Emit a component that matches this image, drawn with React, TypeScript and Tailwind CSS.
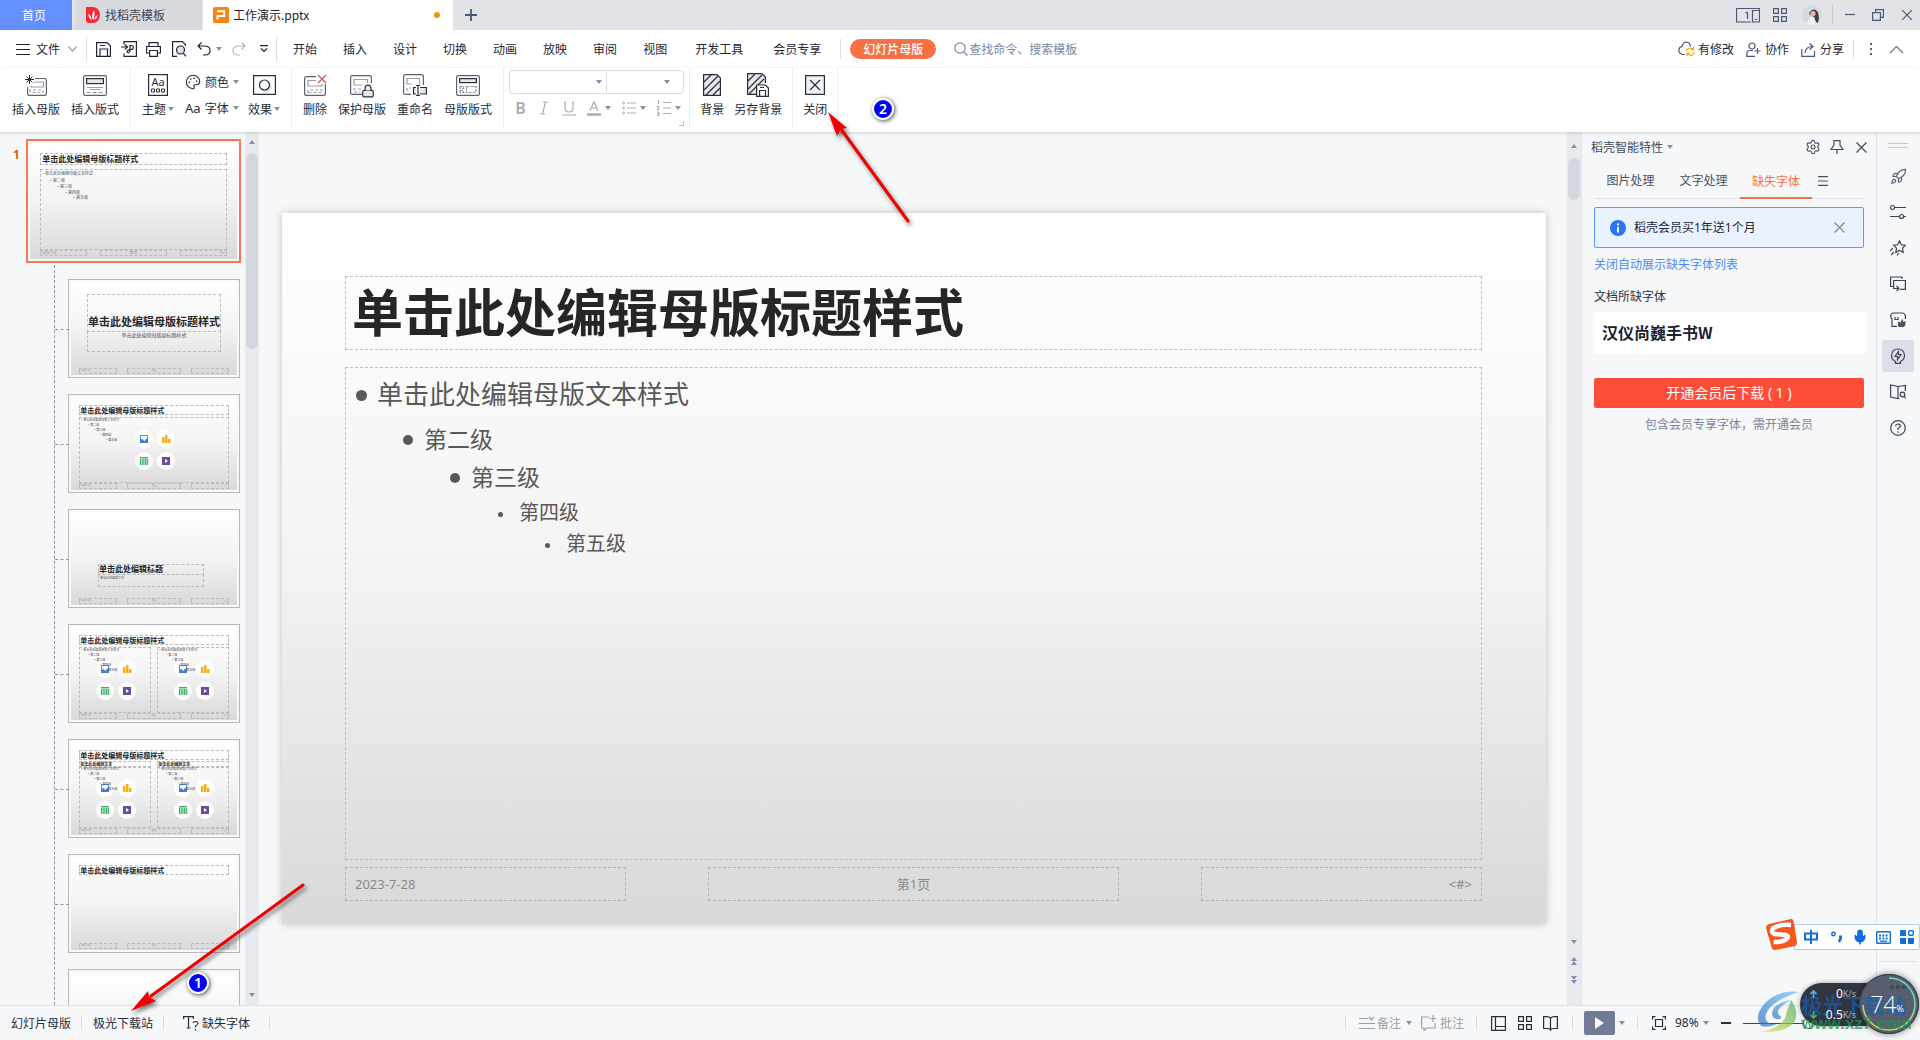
import React from "react";
import { Lock, Mic, Palette, Rocket, Settings } from "lucide-react";

type Kids = { children?: React.ReactNode; className?: string };

function Icon({ w = 16, h = 16, children, className = "" }: Kids & { w?: number; h?: number }) {
  return (
    <svg
      width={w}
      height={h}
      viewBox={`0 0 ${w} ${h}`}
      fill="none"
      stroke="currentColor"
      strokeWidth="1.2"
      className={"block shrink-0 " + className}
      aria-hidden="true"
    >
      {children}
    </svg>
  );
}

function Caret({ className = "" }: { className?: string }) {
  return (
    <svg width="6" height="4" viewBox="0 0 6 4" className={"block shrink-0 " + className} aria-hidden="true">
      <path d="M0 0H6L3 4Z" fill="#8490ab" />
    </svg>
  );
}

function CaretUp() {
  return (
    <svg width="6" height="4" viewBox="0 0 6 4" className="block" aria-hidden="true">
      <path d="M0 4H6L3 0Z" fill="#8490ab" />
    </svg>
  );
}

/* ---------------------------------------------------------------- title bar */

function TitleBar() {
  return (
    <header className="flex h-[30px] shrink-0 items-stretch bg-[#e2e3e7] leading-[30px]">
      <button className="w-[72px] bg-[#658fff] pr-1 text-center text-white">首页</button>
      <button className="ml-[3px] flex w-[127px] items-center gap-1 bg-[#d9dade] pl-[10px] text-[#3d4454]">
        <svg width="16" height="16" viewBox="0 0 16 16" aria-hidden="true">
          <path d="M1 0H8A7 8 0 0 1 8 16H4Q1 16 1 13Z" fill="#fb2637" />
          <path
            d="M8 13Q6 8 9 3Q10.500 8 8 13ZM7 13Q3 11 3.500 6.500Q6.500 9 7 13ZM9 13Q9.500 10 12.500 7.500Q12.500 11.500 9 13Z"
            fill="#fff"
          />
        </svg>
        找稻壳模板
      </button>
      <button className="ml-px flex w-[250px] items-center gap-1 bg-white pl-[10px] pr-[13px] text-[#1c2230]">
        <svg width="16" height="16" viewBox="0 0 16 16" aria-hidden="true">
          <rect width="16" height="16" rx="2" fill="#fa8217" />
          <path d="M4.500 12.500V9H11.200V4.300H4" fill="none" stroke="#fff" strokeWidth="1.900" />
        </svg>
        <span>工作演示.pptx</span>
        <span className="ml-auto size-[6px] rounded-full bg-[#e69b00]" />
      </button>
      <button aria-label="新建" className="ml-3 flex items-center text-[#4b5878]">
        <Icon w={12} h={12}>
          <path d="M6 0V12M0 6H12" strokeWidth="1.8" />
        </Icon>
      </button>
      <div className="ml-auto flex items-center pr-2 text-[#4b5878]">
        <Icon w={24} h={15}>
          <path d="M15 14H.500V.500H23.500V2.500M11.500 4V11M9.500 5L11.500 4" />
          <path d="M23.500 14H16.500V2.500H23.500V14M19 11.500H21" />
        </Icon>
        <Icon w={14} h={14} className="ml-[13px]">
          <path d="M.600.600H5.400V5.400H.600ZM8.600.600H13.400V5.400H8.600ZM.600 8.600H5.400V13.400H.600ZM8.600 8.600H13.400V13.400H8.600Z" />
        </Icon>
        <svg width="20" height="20" viewBox="0 0 20 20" className="ml-[15px]" aria-hidden="true">
          <circle cx="10" cy="10" r="10" fill="#cfdde3" />
          <path d="M5 19Q7 11 11 12L14 17Q12 20 10 20Q7 20 5 19Z" fill="#eef3f5" />
          <path d="M7 9Q8 5 12 4.500Q16 5 16.500 10Q17.500 15 15.500 18Q13 17 12.500 12L10 11Z" fill="#4a3840" />
          <circle cx="11" cy="8.500" r="2.600" fill="#e3b5a2" />
        </svg>
        <span className="ml-[10px] h-5 w-px bg-[#c9cbd1]" />
        <button aria-label="最小化" className="ml-3">
          <Icon w={10} h={12}>
            <path d="M0 5.500H10" />
          </Icon>
        </button>
        <button aria-label="还原" className="ml-[17px]">
          <Icon w={12} h={12}>
            <path d="M.600 3.600H8.400V11.400H.600ZM3.600 3.500V.600H11.400V8.400H8.500" />
          </Icon>
        </button>
        <button aria-label="关闭窗口" className="ml-[18px]">
          <Icon w={10} h={10}>
            <path d="M0 0L10 10M10 0L0 10" />
          </Icon>
        </button>
      </div>
    </header>
  );
}

/* ----------------------------------------------------------------- menu bar */

const shortMenus = ["开始", "插入", "设计", "切换", "动画", "放映", "审阅", "视图"];
const longMenus = ["开发工具", "会员专享"];

function MenuBar() {
  return (
    <nav className="flex h-[38px] shrink-0 items-center bg-white pl-4 text-[#1f2636]">
      <button className="flex items-center gap-[6px]">
        <Icon w={14} h={12}>
          <path d="M0 1.500H14M0 6.500H14M0 11.500H14" strokeWidth="1" />
        </Icon>
        文件
        <Icon w={9} h={6} className="ml-[2px] text-[#9aa0ac]">
          <path d="M.500.500L4.500 5L8.500.500" />
        </Icon>
      </button>
      <span className="ml-[9px] h-6 w-px bg-[#dcdde2]" />
      <button aria-label="保存" className="ml-[9px]">
        <Icon w={15} h={15}>
          <path d="M.600.600H11L14.400 4V14.400H.600ZM4 14.400V7H11.500V14.400M4 3.500H9" />
        </Icon>
      </button>
      <button aria-label="输出为PDF" className="ml-[10px]">
        <Icon w={16} h={16}>
          <path d="M3 3.500V.600H15.400V15.400H3V12.500M0 6H6.500M4 3.500L6.500 6L4 8.500" />
          <path d="M9 4.500V8.500Q6 9 6 11Q7.500 13 9 10V4.500H11Q13.500 6 11.500 8.300H9" />
        </Icon>
      </button>
      <button aria-label="打印" className="ml-[9px]">
        <Icon w={15} h={15}>
          <path d="M3 4V.600H12V4M3 11H.600V4.500H14.400V11H12M3.600 8.500H11.400V14.400H3.600Z" />
        </Icon>
      </button>
      <button aria-label="打印预览" className="ml-[11px]">
        <Icon w={15} h={16}>
          <path d="M5 15.400H.600V.600H10.500L13.400 3.500V5M11.500 12.500L14 15.400" />
          <circle cx="8.500" cy="9" r="4" fill="#dfe2e8" />
        </Icon>
      </button>
      <button aria-label="撤销" className="ml-[10px]">
        <Icon w={14} h={14}>
          <path d="M4.500.500L1 4L4.500 7.500M1 4H8.500Q13 4.500 13 8.500Q13 13 8 13H6" />
        </Icon>
      </button>
      <Caret className="ml-[5px]" />
      <button aria-label="恢复" className="ml-[10px] text-[#b3b7c0]">
        <Icon w={14} h={14}>
          <path d="M9.500.500L13 4L9.500 7.500M13 4H5.500Q1 4.500 1 8.500Q1 13 6 13H8" />
        </Icon>
      </button>
      <button aria-label="更多" className="ml-[14px]">
        <Icon w={8} h={8}>
          <path d="M0 .600H8M1 3.500L4 6.500L7 3.500" />
        </Icon>
      </button>
      <span className="ml-2 mr-[3px] h-6 w-px bg-[#dcdde2]" />
      {shortMenus.map((m) => (
        <button key={m} className="px-[13px]">
          {m}
        </button>
      ))}
      {longMenus.map((m) => (
        <button key={m} className="px-[15px]">
          {m}
        </button>
      ))}
      <span className="ml-1 h-5 w-px bg-[#dcdde2]" />
      <button className="ml-[9px] h-5 rounded-full bg-[#f76f45] px-[13px] font-medium leading-5 text-white">
        幻灯片母版
      </button>
      <button className="ml-[18px] flex items-center gap-px text-[#7c879f]">
        <Icon w={14} h={14}>
          <circle cx="6" cy="6" r="5.200" />
          <path d="M10 10L13.500 13.500" />
        </Icon>
        查找命令、搜索模板
      </button>
      <div className="ml-auto flex items-center pr-4">
        <button className="flex items-center gap-[3px]">
          <Icon w={17} h={16}>
            <path d="M7 13.500H5Q.800 13 .800 9Q1 6 4 5.500Q5 1 8.500 1Q12 1.500 12.500 5.500" stroke="#4b5878" />
            <path
              d="M8.500 10Q9 7 12 7L15 8M15.500 6V9H12.500M16 11Q15.500 14.500 12.500 14.500L9.500 13M9 15V12H12"
              stroke="#f5a400"
            />
          </Icon>
          有修改
        </button>
        <button className="ml-3 flex items-center gap-1">
          <Icon w={15} h={15} className="text-[#4b5878]">
            <circle cx="6" cy="4" r="3" />
            <path d="M9 14.400H.800V11Q1 8.500 4 8.500H7M11.500 6V12M8.500 9H14.500" />
          </Icon>
          协作
        </button>
        <button className="ml-3 flex items-center gap-1">
          <Icon w={15} h={15} className="text-[#4b5878]">
            <path d="M.800 7V14.400H13.500V9M4 11Q4 5 11 4.500M8.500 1.500L12 4.500L8.500 7.500" />
          </Icon>
          分享
        </button>
        <span className="ml-[9px] h-5 w-px bg-[#dcdde2]" />
        <Icon w={2} h={12} className="ml-4 text-[#5b6478]">
          <path d="M1 0V2M1 5V7M1 10V12" strokeWidth="2" />
        </Icon>
        <button aria-label="收起功能区" className="ml-[17px] text-[#6a7286]">
          <Icon w={15} h={9}>
            <path d="M1 8L7.500 1.500L14 8" />
          </Icon>
        </button>
      </div>
    </nav>
  );
}

/* ------------------------------------------------------------------- ribbon */

function Tool({ label, caret, children }: Kids & { label: string; caret?: boolean }) {
  return (
    <button className="flex shrink-0 flex-col items-center gap-[4px]">
      <span className="flex h-[22px] items-center">{children}</span>
      <span className="flex items-center gap-[2px] leading-[18px]">
        {label}
        {caret && <Caret />}
      </span>
    </button>
  );
}

function Sep() {
  return <span className="h-[61px] w-px shrink-0 self-start bg-[#eceded]" />;
}

function RibbonSelect({ label, className }: { label: string; className: string }) {
  return (
    <span className={"relative flex h-6 items-center border border-[#dcdde2] " + className}>
      <select aria-label={label} className="h-full w-full appearance-none bg-transparent outline-none" defaultValue="">
        <option value=""></option>
      </select>
      <Caret className="pointer-events-none absolute right-1" />
    </span>
  );
}

function Ribbon() {
  return (
    <section className="relative z-10 flex h-16 shrink-0 items-start gap-[11px] bg-white pl-3 text-[#262d3b] shadow-[0_1px_3px_rgba(0,0,0,0.16)] [&>button]:mt-[6px]">
      <Tool label="插入母版">
        <Icon w={22} h={21}>
          <path d="M10 3.500H19.500Q21.400 3.500 21.400 5V18.500Q21.400 20.400 19.500 20.400H4.500Q2.600 20.400 2.600 18.500V12" stroke="#5b6270" />
          <path d="M9 7H18.500V12H6V11" stroke="#9b9fa8" />
          <path d="M5 17V15H18V17.500H5" strokeDasharray="3 2" stroke="#9b9fa8" />
          <path d="M4.500 0V9M0 4.500H9M1.500 1.500L7.500 7.500M7.500 1.500L1.500 7.500" strokeWidth="1" />
        </Icon>
      </Tool>
      <Tool label="插入版式">
        <Icon w={24} h={21}>
          <rect x=".600" y=".600" width="22.800" height="19.800" rx="1.500" stroke="#5b6270" />
          <rect x="3.600" y="3.600" width="16.800" height="5" fill="#e2e4e8" />
          <path d="M4 12.500H20M7 14.500H17" stroke="#9b9fa8" />
          <path d="M3.500 17.500H20.500" strokeDasharray="4 2" stroke="#8d919b" />
        </Icon>
      </Tool>
      <Sep />
      <Tool label="主题" caret>
        <svg width="20" height="22" viewBox="0 0 20 22" aria-hidden="true">
          <rect x=".600" y=".600" width="18.800" height="20.800" fill="none" stroke="#262d3b" strokeWidth="1.200" />
          <text x="10" y="12" textAnchor="middle" fontSize="11" fontFamily="Noto Sans" fill="#262d3b">
            Aa
          </text>
          <path d="M3.500 15H6.500V18H3.500ZM8.500 15H11.500V18H8.500ZM13.500 15H16.500V18H13.500Z" fill="none" stroke="#262d3b" />
        </svg>
      </Tool>
      <div className="mt-1 flex w-[52px] shrink-0 flex-col gap-[6px] leading-5">
        <button className="flex items-center">
          <Palette size={16} strokeWidth={1.6} className="mr-1 shrink-0" />
          颜色
          <Caret className="ml-1" />
        </button>
        <button className="flex items-center whitespace-nowrap">
          <span className="mr-1 w-4 font-['Noto_Sans'] text-[13px]">Aa</span>
          字体
          <Caret className="ml-1" />
        </button>
      </div>
      <Tool label="效果" caret>
        <Icon w={23} h={20}>
          <circle cx="13" cy="12" r="5.500" fill="#dde0e6" stroke="none" />
          <path d="M.600.600H22.400V19.400H.600Z" />
          <circle cx="11.500" cy="10" r="5" fill="#fff" />
        </Icon>
      </Tool>
      <Sep />
      <Tool label="删除">
        <Icon w={23} h={21}>
          <path d="M12 1.600H2.500Q.600 1.600 .600 3.500V18.500Q.600 20.400 2.500 20.400H19.500Q21.400 20.400 21.400 18.500V9" stroke="#5b6270" />
          <path d="M12 5.500H4V11H18V9" stroke="#9b9fa8" />
          <path d="M4 18V15H18V17.500H4" strokeDasharray="3 2" stroke="#9b9fa8" />
          <path d="M14 0L22 8M22 0L14 8" stroke="#d6494f" />
        </Icon>
      </Tool>
      <Tool label="保护母版">
        <span className="relative flex">
          <Icon w={24} h={21}>
            <path d="M12 19.400H2.500Q.600 19.400 .600 17.500V2.500Q.600.600 2.500.600H19.500Q21.400.600 21.400 2.500V8" stroke="#5b6270" />
            <path d="M12 10H4V4.500H17.500V8" stroke="#9b9fa8" />
            <path d="M11 14V14H4V17H11" strokeDasharray="3 2" stroke="#9b9fa8" />
          </Icon>
          <Lock size={14} strokeWidth={2} fill="#e6e8ec" className="absolute -right-[1px] top-[9px]" />
        </span>
      </Tool>
      <Tool label="重命名">
        <Icon w={24} h={22}>
          <path d="M8 20.400H2.500Q.600 20.400 .600 18.500V2.500Q.600.600 2.500.600H18.500Q20.400.600 20.400 2.500V11" stroke="#5b6270" />
          <path d="M9 10H4V4.500H16.500V10" stroke="#9b9fa8" />
          <path d="M4 17V14H8" strokeDasharray="3 2" stroke="#9b9fa8" />
          <path d="M13 13.500H10.500V20H13M17 13.500H23.400V20H17" fill="#e6e8ec" />
          <path d="M13 11.500H17M15 11.500V21.500M13 21.500H17" />
        </Icon>
      </Tool>
      <Tool label="母版版式">
        <Icon w={24} h={21}>
          <rect x=".600" y=".600" width="22.800" height="19.800" rx="1.500" stroke="#5b6270" />
          <rect x="3.600" y="3.600" width="16.800" height="4" fill="#e2e4e8" />
          <path d="M4 11.500H7.500V13.500H4ZM4 15.500H7.500V17.500H4ZM10.500 11.500H20V17.500H10.500Z" strokeDasharray="3 1" stroke="#8d919b" />
        </Icon>
      </Tool>
      <div className="flex items-start gap-[10px] [&>button]:mt-[6px]">
        <div className="flex items-start gap-[5px]">
          <Sep />
          <div className="relative mt-[2px] w-[175px]">
            <div className="flex">
              <RibbonSelect label="字体" className="w-[97px] rounded-l-sm border-r-0" />
              <RibbonSelect label="字号" className="w-[78px] rounded-r-sm [&>svg]:right-[13px]" />
            </div>
            <div className="mt-1 flex h-5 items-center gap-[11px] px-[6px] text-[#a9acb3]">
              <button aria-label="加粗" className="w-[14px] font-['Noto_Sans'] text-[16px] font-semibold leading-5">
                B
              </button>
              <button aria-label="倾斜" className="w-[14px]">
                <Icon w={14} h={14}>
                  <path d="M6 1H11M3 13H8M8.500 1L5.500 13" />
                </Icon>
              </button>
              <button aria-label="下划线" className="w-[14px]">
                <Icon w={14} h={15}>
                  <path d="M3 0V7Q3 11 7 11Q11 11 11 7V0M0 14H14" />
                </Icon>
              </button>
              <button aria-label="字体颜色" className="flex items-center gap-1">
                <Icon w={14} h={15}>
                  <path d="M3 10L7 .500L11 10M4.500 7H9.500" />
                  <path d="M0 13.500H14" strokeWidth="2.500" />
                </Icon>
                <Caret />
              </button>
              <button aria-label="项目符号" className="flex items-center gap-1">
                <Icon w={14} h={14}>
                  <path d="M5 2H14M5 7H14M5 12H14" />
                  <circle cx="1.500" cy="2" r="1" strokeWidth="1" />
                  <circle cx="1.500" cy="7" r="1" strokeWidth="1" />
                  <circle cx="1.500" cy="12" r="1" strokeWidth="1" />
                </Icon>
                <Caret />
              </button>
              <button aria-label="编号" className="flex items-center gap-1">
                <Icon w={14} h={16}>
                  <path d="M6 2.500H14M6 8H14M6 13.500H14M1.500 0V4M0 6.500H2V8H.500V9.500H2.500M0 12H2V15.500H0M0 13.700H2" strokeWidth="1" />
                </Icon>
                <Caret />
              </button>
            </div>
            <Icon w={5} h={5} className="absolute -bottom-2 right-0 text-[#b9bdc6]">
              <path d="M4.500 0V4.500H0" strokeWidth="1" />
            </Icon>
          </div>
          <Sep />
        </div>
        <Tool label="背景">
          <Icon w={18} h={22}>
            <path d="M.600.600H14L17.400 4V21.400H.600Z" fill="#e6e8ec" />
            <path d="M1 8L8 1M1 16L15 2M3 21L17 7M10 21L17 14" />
          </Icon>
        </Tool>
        <Tool label="另存背景">
          <Icon w={23} h={24}>
            <path d="M9 21.400H.600V.600H15L18.400 4V10" fill="#e6e8ec" />
            <path d="M1 8L8 1M1 16L15 2M2 21L17 6" />
            <path d="M9.600 12H18.500L21.400 15V23.400H9.600ZM12.600 23V17.500H18.500V23M13 14.500H17" fill="#fff" />
          </Icon>
        </Tool>
        <Sep />
        <Tool label="关闭">
          <Icon w={20} h={20}>
            <path d="M.600.600H19.400V19.400H.600Z" fill="#f1f2f5" />
            <path d="M5 5L15 15M15 5L5 15" />
          </Icon>
        </Tool>
        <Sep />
      </div>
    </section>
  );
}

/* --------------------------------------------------------------- thumbnails */

function Holder({ className, children }: Kids) {
  return <div className={"absolute border border-dashed border-[#bcbcbc] " + className}>{children}</div>;
}

function Footers({ size }: { size: string }) {
  return (
    <div
      className={
        "absolute inset-x-[5%] top-[92%] flex h-[6px] justify-between whitespace-nowrap leading-[4px] text-[#8a8a8a] " + size
      }
    >
      <div className="w-[25%] border border-dashed border-[#bcbcbc] pl-px">2023-7-28</div>
      <div className="w-[36%] border border-dashed border-[#bcbcbc] text-center">第1页</div>
      <div className="w-[25%] border border-dashed border-[#bcbcbc] pr-px text-right">&lt;#&gt;</div>
    </div>
  );
}

function ThumbTitle() {
  return (
    <Holder className="left-[5%] top-[9%] h-[10px] w-[90%] whitespace-nowrap text-[7px] font-bold leading-[8px] text-[#262626]">
      单击此处编辑母版标题样式
    </Holder>
  );
}

const levels = ["第二级", "第三级", "第四级", "第五级"];
const thumbIndents = ["pl-[7px]", "pl-[13px]", "pl-[19px]", "pl-[25px]"];

function ThumbOutline() {
  return (
    <ul className="whitespace-nowrap pl-px font-['Noto_Sans','Noto_Sans_CJK_SC',sans-serif] text-[3px] leading-[5px] text-[#555]">
      <li>• 单击此处编辑母版文本样式</li>
      {levels.map((l, i) => (
        <li key={l} className={thumbIndents[i]}>
          • {l}
        </li>
      ))}
    </ul>
  );
}

function ContentIcons({ className }: { className: string }) {
  return (
    <div className={"absolute grid grid-cols-2 gap-[4px] " + className}>
      {[0, 1, 2, 3].map((i) => (
        <svg key={i} width="18" height="18" viewBox="0 0 18 18" aria-hidden="true">
          <circle cx="9" cy="9" r="9" fill="#fff" fillOpacity=".95" />
          {i === 0 && (
            <>
              <path d="M5.500 5.500H12.500V12.500H5.500Z" fill="none" stroke="#4a87e0" />
              <path d="M5 13V10L7.500 9L9.500 11L11.500 8.500L13 10V13Z" fill="#3e7fe0" />
            </>
          )}
          {i === 1 && <path d="M5 7H7.500V13H5ZM8 5H10.500V13H8ZM11 9H13.500V13H11Z" fill="#fbad18" />}
          {i === 2 && (
            <>
              <path d="M5 5H13V13H5Z" fill="#a5dab8" />
              <path d="M5 5.500H13M5.500 7V13M8 7V13M10.500 7V13M12.800 7V13" stroke="#3fae6a" />
            </>
          )}
          {i === 3 && (
            <>
              <path d="M5 5H13V13H5Z" fill="#6b4c9a" />
              <path d="M8 7L11 9L8 11Z" fill="#fff" />
            </>
          )}
        </svg>
      ))}
    </div>
  );
}

function LayoutThumb({ children }: Kids) {
  return (
    <div className="relative ml-[68px] mt-4 h-[99px] w-[172px] shrink-0 border border-[#b6b8bd] bg-[#f8f8f9] p-[2px] before:absolute before:right-full before:top-1/2 before:w-[14px] before:border-t before:border-dashed before:border-[#8f9298]">
      <div className="relative h-full overflow-hidden bg-linear-to-b from-white via-[#f3f3f3] to-[#d9d9d9]">{children}</div>
    </div>
  );
}

function TwoCols({ top }: { top: string }) {
  return (
    <>
      <Holder className={"left-[5%] w-[43%] " + top}>
        <ContentIcons className="left-[16px] top-[12px]" />
        <div className="relative">
          <ThumbOutline />
        </div>
      </Holder>
      <Holder className={"right-[5%] w-[43%] " + top}>
        <ContentIcons className="left-[16px] top-[12px]" />
        <div className="relative">
          <ThumbOutline />
        </div>
      </Holder>
    </>
  );
}

function ThumbPane() {
  return (
    <aside className="flex w-[259px] shrink-0 bg-[#f6f7f9]">
      <div className="relative flex w-[245px] flex-col overflow-hidden">
        <div className="mt-[7px] flex h-[124px] shrink-0">
          <span className="w-[26px] pl-[13px] pt-[7px] font-['Noto_Sans'] font-bold leading-[18px] text-[#d4640f]">1</span>
          <div className="w-[215px] border-2 border-[#fb7654] bg-[#f8f8f9] p-[2px]">
            <div className="relative h-full bg-linear-to-b from-white via-[#f3f3f3] to-[#d9d9d9]">
              <Holder className="left-[5%] top-[9%] h-[12px] w-[90%] pl-px text-[8px] font-bold leading-[9px] text-[#262626]">
                单击此处编辑母版标题样式
              </Holder>
              <Holder className="left-[5%] top-[22%] h-[70%] w-[90%]">
                <ul className="pl-px font-['Noto_Sans','Noto_Sans_CJK_SC',sans-serif] text-[4px] leading-[7px] text-[#555]">
                  <li>• 单击此处编辑母版文本样式</li>
                  <li className="pl-[8px]">• 第二级</li>
                  <li className="pl-[15px] leading-[6px]">• 第三级</li>
                  <li className="pl-[23px] leading-[5px]">• 第四级</li>
                  <li className="pl-[31px] leading-[5px]">• 第五级</li>
                </ul>
              </Holder>
              <Footers size="text-[3px]" />
            </div>
          </div>
        </div>
        <div className="relative flex flex-col before:absolute before:left-[54px] before:top-[2px] before:h-full before:border-l before:border-dashed before:border-[#8f9298]">
          <LayoutThumb>
            <Holder className="left-[16px] top-[12px] flex h-[38px] w-[134px] items-end whitespace-nowrap pb-px text-[11px] font-bold leading-[18px] text-[#262626]">
              单击此处编辑母版标题样式
            </Holder>
            <Holder className="left-[16px] top-[49px] h-[21px] w-[134px] text-center text-[5px] leading-[6px] text-[#555]">
              单击此处编辑母版副标题样式
            </Holder>
            <Footers size="text-[2px]" />
          </LayoutThumb>
          <LayoutThumb>
            <ThumbTitle />
            <Holder className="left-[5%] top-[22%] h-[70%] w-[90%]">
              <ThumbOutline />
              <ContentIcons className="left-[55px] top-[12px]" />
            </Holder>
            <Footers size="text-[2px]" />
          </LayoutThumb>
          <LayoutThumb>
            <Holder className="left-[27px] top-[52px] h-[11px] w-[106px] text-[8px] font-bold leading-[8px] text-[#262626]">
              单击此处编辑标题
            </Holder>
            <Holder className="left-[27px] top-[62px] h-[13px] w-[106px] pl-px text-[3px] leading-[6px] text-[#555]">
              单击此处编辑文本
            </Holder>
            <Footers size="text-[2px]" />
          </LayoutThumb>
          <LayoutThumb>
            <ThumbTitle />
            <TwoCols top="top-[22%] h-[70%]" />
            <Footers size="text-[2px]" />
          </LayoutThumb>
          <LayoutThumb>
            <ThumbTitle />
            <Holder className="left-[5%] top-[20%] h-[7px] w-[43%] text-[4px] font-bold leading-[5px] text-[#333]">
              单击此处编辑文本
            </Holder>
            <Holder className="right-[5%] top-[20%] h-[7px] w-[43%] text-[4px] font-bold leading-[5px] text-[#333]">
              单击此处编辑文本
            </Holder>
            <TwoCols top="top-[26%] h-[66%]" />
            <Footers size="text-[2px]" />
          </LayoutThumb>
          <LayoutThumb>
            <ThumbTitle />
            <Footers size="text-[2px]" />
          </LayoutThumb>
          <LayoutThumb />
        </div>
      </div>
      <div className="flex w-[14px] flex-col items-center bg-[#e9eaf0] pb-2 pt-2">
        <CaretUp />
        <div className="mt-[9px] h-[196px] w-3 rounded-full bg-[#d4d7df]" />
        <Caret className="mt-auto" />
      </div>
    </aside>
  );
}

/* ------------------------------------------------------------- slide canvas */

const outline = [
  { text: "单击此处编辑母版文本样式", row: "pl-[10px] h-[54px] text-[26px]", dot: "size-[11px] mr-[10px]" },
  { text: "第二级", row: "pl-[57px] h-9 text-[23px]", dot: "size-[10px] mr-[11px]" },
  { text: "第三级", row: "pl-[104px] h-10 text-[23px]", dot: "size-[10px] mr-[11px]" },
  { text: "第四级", row: "pl-[152px] h-8 text-[20px]", dot: "size-[5px] mr-[16px]" },
  { text: "第五级", row: "pl-[199px] h-[30px] text-[20px]", dot: "size-[5px] mr-[16px]" },
];

function Canvas() {
  return (
    <main className="flex min-w-0 flex-1 items-center bg-[#f6f7f9] pl-[23px] pr-[21px]">
      <div className="flex aspect-[1264/711] w-full flex-col bg-linear-to-b from-white via-[#f3f3f3] to-[#d9d9d9] pb-[23px] pl-[63px] pr-16 pt-[63px] shadow-[0_0_8px_rgba(0,0,0,0.22)]">
        <h1 className="flex h-[74px] shrink-0 items-center border border-dashed border-[#c0c0c0] pb-[6px] pl-[6px] text-[51px] font-bold leading-none text-[#262626]">
          单击此处编辑母版标题样式
        </h1>
        <ul className="mt-[17px] flex-1 border border-dashed border-[#c0c0c0] text-[#595959]">
          {outline.map((o) => (
            <li key={o.text} className={"flex items-center pb-1 leading-none " + o.row}>
              <span className={"mt-1 shrink-0 rounded-full bg-[#595959] " + o.dot} />
              {o.text}
            </li>
          ))}
        </ul>
        <div className="mt-[7px] flex h-[34px] shrink-0 items-center justify-between font-['Noto_Sans','Noto_Sans_CJK_SC',sans-serif] text-[13px] leading-8 text-[#8a8a8a]">
          <div className="w-[281px] border border-dashed border-[#b4b4b4] pl-[9px]">2023-7-28</div>
          <div className="w-[411px] border border-dashed border-[#b4b4b4] text-center">第1页</div>
          <div className="w-[281px] border border-dashed border-[#b4b4b4] pr-[9px] text-right">&lt;#&gt;</div>
        </div>
      </div>
    </main>
  );
}

function CanvasScrollbar() {
  return (
    <div className="flex w-[15px] shrink-0 flex-col items-center border-r border-[#e2e4ea] bg-[#e9eaf0] pb-[21px] pt-3">
      <CaretUp />
      <div className="mt-[10px] h-[42px] w-3 rounded-full bg-[#d4d7df]" />
      <Caret className="mt-auto" />
      <div className="mt-[13px]">
        <CaretUp />
        <CaretUp />
      </div>
      <div className="mt-[11px]">
        <Caret />
        <Caret />
      </div>
    </div>
  );
}

/* --------------------------------------------------------------- side panel */

function SidePanel() {
  return (
    <aside className="flex w-[294px] shrink-0 flex-col bg-[#f6f7f9] text-[#2b3242]">
      <div className="mt-[5px] flex h-5 items-center pl-[9px] pr-[9px] text-[#414a5e]">
        <button className="flex items-center gap-1">
          稻壳智能特性
          <Caret />
        </button>
        <Settings size={16} strokeWidth={1.6} className="ml-auto" />
        <button aria-label="固定" className="ml-[9px]">
          <Icon w={14} h={14}>
            <path d="M4 .600H10V5L13 9.500H1L4 5ZM7 9.500V14" />
          </Icon>
        </button>
        <button aria-label="关闭面板" className="ml-3">
          <Icon w={11} h={11}>
            <path d="M.500.500L10.500 10.500M10.500.500L.500 10.500" />
          </Icon>
        </button>
      </div>
      <div className="mx-3 mt-2 flex h-[34px] items-stretch border-b border-[#dfe2e9] text-[#4a5264]">
        <button className="w-[73px] pb-1">图片处理</button>
        <button className="w-[73px] pb-1">文字处理</button>
        <button className="-mb-px w-[72px] border-b-2 border-[#f76f45] pb-px text-[#f76f45]">缺失字体</button>
        <button aria-label="菜单" className="ml-[6px] pb-px">
          <Icon w={10} h={10}>
            <path d="M0 .600H10M0 5H10M0 9.400H10" />
          </Icon>
        </button>
      </div>
      <div className="mx-3 mt-2 flex h-[41px] items-center gap-2 rounded-[2px] border border-[#5f97fb] bg-[#ebf2ff] pl-[15px] pr-[18px] text-[#1f2636]">
        <svg width="16" height="16" viewBox="0 0 16 16" aria-hidden="true">
          <circle cx="8" cy="8" r="8" fill="#2b73fb" />
          <path d="M8 3.500V5.500M8 7V12.500" stroke="#fff" strokeWidth="2" />
        </svg>
        <span className="font-['Noto_Sans','Noto_Sans_CJK_SC',sans-serif]">稻壳会员买1年送1个月</span>
        <button aria-label="关闭提示" className="ml-auto text-[#7c859a]">
          <Icon w={11} h={11}>
            <path d="M.500.500L10.500 10.500M10.500.500L.500 10.500" />
          </Icon>
        </button>
      </div>
      <a href="#" className="mx-3 mt-[7px] text-[#4a8df8]">
        关闭自动展示缺失字体列表
      </a>
      <p className="mx-3 mt-[14px]">文档所缺字体</p>
      <p className="ml-3 mr-[10px] mt-[7px] h-[42px] rounded-[2px] bg-white pl-2 text-[16px] font-bold leading-10 text-[#1c2230]">
        汉仪尚巍手书W
      </p>
      <button className="mx-3 mt-6 h-[30px] rounded-[2px] bg-[#ff4d38] font-['Noto_Sans','Noto_Sans_CJK_SC',sans-serif] text-[14px] leading-[30px] text-white">
        开通会员后下载 ( 1 )
      </button>
      <p className="mt-[7px] text-center text-[#7c859a]">包含会员专享字体，需开通会员</p>
    </aside>
  );
}

const railIcons: { name: string; active?: boolean; art: React.ReactNode }[] = [
  { name: "推荐", art: <Rocket size={17} strokeWidth={1.7} className="text-[#5a6274]" /> },
  {
    name: "属性",
    art: (
      <Icon>
        <circle cx="2.500" cy="3.500" r="2" />
        <circle cx="11.500" cy="12.500" r="2" />
        <path d="M4.500 3.500H16M0 12.500H9.500M13.500 12.500H16" />
      </Icon>
    ),
  },
  {
    name: "动画",
    art: (
      <Icon>
        <path d="M9.500 1L11.400 4.800L15.400 5.300L12.500 8.200L13.200 12.300L9.500 10.400L5.800 12.300L6.500 8.200L3.600 5.300L7.600 4.800Z" />
        <path d="M3 8L0 11M4 12L1 15M9 13L7 15.500" />
      </Icon>
    ),
  },
  {
    name: "切换",
    art: (
      <Icon>
        <path d="M3 10.500H.600V1H12V3M6 12.500H3.600V4.500H15.400V13.400H10M4 12.500H8.500M6.500 10L9 12.500L6.500 15" />
      </Icon>
    ),
  },
  {
    name: "素材",
    art: (
      <Icon>
        <path d="M7 14.400H2V7Q.600 6 .600 4Q1 1 4 1H12Q15 1 15.400 4V7M5 5V7.500H8V5" />
        <path d="M8 14Q7 11 9 9L10.500 11Q10.500 9 12.500 7L13.500 10L15.500 9Q16 13 14 15H9Z" fill="#4a5264" stroke="none" />
      </Icon>
    ),
  },
  {
    name: "智能特性",
    active: true,
    art: (
      <Icon>
        <path d="M5.500 13.500Q1.500 11.500 1.500 7.500Q2 1 8 1Q14 1 14.500 7.500Q14.500 11.500 10.500 13.500V15.400H5.500Z" />
        <path d="M8.500 3.500L5 8.500H7.500V11.500L11 6.500H8.500Z" />
      </Icon>
    ),
  },
  {
    name: "资料",
    art: (
      <Icon>
        <path d="M8 2.500L.600 1V13L8 14.500ZM8 2.500L15.400 1.500V7M8 14.500H9.500" />
        <circle cx="12.500" cy="10.500" r="2.300" />
        <path d="M14 12L15.800 14.500" />
      </Icon>
    ),
  },
  {
    name: "帮助",
    art: (
      <Icon>
        <circle cx="8" cy="8" r="7.300" />
        <path d="M5.500 6Q5.700 4 8 4Q10.500 4.200 10.400 6.200Q10.200 7.500 8 8.500V10M8 11.300V12.700" />
      </Icon>
    ),
  },
];

function Rail() {
  return (
    <nav className="flex w-11 shrink-0 flex-col items-center border-l border-[#dfe2e9] bg-[#f6f7f9] pr-px text-[#3b4357]">
      <div className="mb-[10px] mt-[11px] h-[5px] w-5 border-y border-[#c6c9d0]" />
      {railIcons.map((r) => (
        <button
          key={r.name}
          aria-label={r.name}
          className={"my-[2px] flex size-8 items-center justify-center rounded-[2px] " + (r.active ? "bg-[#dadee6]" : "")}
        >
          {r.art}
        </button>
      ))}
      <div className="mb-[43px] mt-auto h-px w-[38px] bg-[#dfe2e9]" />
    </nav>
  );
}

/* --------------------------------------------------------------- status bar */

function StatusBar() {
  return (
    <footer className="flex h-[35px] shrink-0 items-center border-t border-[#dfe2e6] bg-[#f6f7f9] pl-[11px] text-[#262d3b]">
      <span>幻灯片母版</span>
      <span className="ml-[10px] h-[14px] w-px bg-[#dcdde2]" />
      <span className="ml-[11px]">极光下载站</span>
      <span className="ml-[10px] h-[14px] w-px bg-[#dcdde2]" />
      <button className="ml-[19px] flex items-center gap-[3px]">
        <Icon w={16} h={15}>
          <path d="M.600 3V.600H10.400V3M5.500.600V12M3.500 12H7.500M10 7Q10.500 5.500 12.500 5.500Q15 5.700 14.800 7.500Q14.500 9 12.500 10V11.500M12.500 13V14.500" />
        </Icon>
        缺失字体
      </button>
      <span className="ml-[19px] h-[14px] w-px bg-[#dcdde2]" />
      <div className="ml-auto flex items-center">
        <span className="h-[14px] w-px bg-[#dcdde2]" />
        <button className="ml-[13px] flex items-center gap-[2px] text-[#9b9fa8]">
          <Icon w={16} h={14}>
            <path d="M0 2.500H9M10 1L12.500 4L15 1M0 7.500H16M0 12.500H16" />
          </Icon>
          备注
        </button>
        <Caret className="ml-[5px]" />
        <button className="ml-[9px] flex items-center gap-[3px] text-[#9b9fa8]">
          <Icon w={16} h={16}>
            <path d="M8 2H.600V13H3V15.500L5.500 13H14V8M12 0V7M8.500 3.500H15.500" />
          </Icon>
          批注
        </button>
        <span className="ml-3 h-[14px] w-px bg-[#dcdde2]" />
        <button aria-label="普通视图" className="ml-[14px]">
          <Icon w={15} h={15}>
            <path d="M.600.600H14.400V14.400H.600ZM4.500.600V14.400M4.500 10.500H14.400" />
          </Icon>
        </button>
        <button aria-label="幻灯片浏览" className="ml-3">
          <Icon w={14} h={14}>
            <path d="M.600.600H5.400V5.400H.600ZM8.600.600H13.400V5.400H8.600ZM.600 8.600H5.400V13.400H.600ZM8.600 8.600H13.400V13.400H8.600Z" />
          </Icon>
        </button>
        <button aria-label="阅读视图" className="ml-[11px]">
          <Icon w={15} h={15}>
            <path d="M7.500 2Q6 .600 4 .600H.600V12.500H5Q7 12.500 7.500 14Q8 12.500 10 12.500H14.400V.600H11Q9 .600 7.500 2V14" />
          </Icon>
        </button>
        <span className="ml-[14px] h-[14px] w-px bg-[#dcdde2]" />
        <button aria-label="从当前开始放映" className="ml-[11px] flex h-6 w-[31px] items-center justify-center rounded-[2px] bg-[#717b95]">
          <svg width="9" height="12" viewBox="0 0 9 12" aria-hidden="true">
            <path d="M0 0L9 6L0 12Z" fill="#fff5ee" />
          </svg>
        </button>
        <Caret className="ml-1" />
        <span className="ml-3 h-[14px] w-px bg-[#dcdde2]" />
        <button aria-label="适应窗口" className="ml-[14px]">
          <Icon w={14} h={14}>
            <path d="M.600 3.500V.600H3.500M10.500.600H13.400V3.500M13.400 10.500V13.400H10.500M3.500 13.400H.600V10.500M3.500 3.500H10.500V10.500H3.500Z" />
          </Icon>
        </button>
        <button className="ml-[9px] flex w-[34px] items-center justify-between font-['Noto_Sans']">
          98%
          <Caret />
        </button>
        <button aria-label="缩小" className="ml-3">
          <Icon w={10} h={4}>
            <path d="M0 2H10" strokeWidth="2" />
          </Icon>
        </button>
        <input
          type="range"
          aria-label="缩放"
          defaultValue={50}
          className="ml-3 h-px w-[132px] appearance-none bg-[#3d465c] [&::-webkit-slider-thumb]:size-3 [&::-webkit-slider-thumb]:appearance-none [&::-webkit-slider-thumb]:rounded-full [&::-webkit-slider-thumb]:border [&::-webkit-slider-thumb]:border-[#3d465c] [&::-webkit-slider-thumb]:bg-white"
        />
        <button aria-label="放大" className="ml-[17px] mr-4">
          <Icon w={12} h={12}>
            <path d="M6 0V12M0 6H12" strokeWidth="2" />
          </Icon>
        </button>
      </div>
    </footer>
  );
}

/* ----------------------------------------------------------------- overlays */

function ImeBar() {
  return (
    <div className="absolute bottom-[90px] right-0 z-20 flex items-end">
      <svg width="31" height="31" viewBox="0 0 31 31" className="z-10 -mr-[3px]" aria-hidden="true">
        <path d="M3 5L25 0Q27 0 27.500 2L31 23Q31 26 29 27L9 31Q6 31 5.500 28L0 9Q0 6 3 5Z" fill="#f4571f" />
        <path
          d="M25 6Q14 5 7.500 9Q4 13.500 9 15L20 16Q24 17.500 20 20.500Q15 23.500 7.500 23"
          fill="none"
          stroke="#fff"
          strokeWidth="4.500"
        />
      </svg>
      <div className="flex h-[26px] w-[126px] items-center justify-between rounded-r-[2px] border border-[#b5cbe8] bg-white pl-[9px] pr-[5px] text-[#0f6fd6]">
        <Icon w={14} h={14}>
          <path d="M1 3.500H13V9.500H1ZM7 0V14" strokeWidth="2" />
        </Icon>
        <Icon w={12} h={12} className="ml-1">
          <circle cx="2.500" cy="3" r="1.700" strokeWidth="1.500" />
          <path d="M9.500 4.500V7.500Q9.500 9.500 7.500 10.500" strokeWidth="2.800" />
        </Icon>
        <Mic size={16} strokeWidth={2.500} fill="#0f6fd6" />
        <svg width="15" height="13" viewBox="0 0 15 13" aria-hidden="true">
          <rect x=".700" y=".700" width="13.600" height="11.600" rx="1" fill="none" stroke="#0f6fd6" strokeWidth="1.400" />
          <path d="M3 4.500H12M3 7.500H12" stroke="#0f6fd6" strokeWidth="2" strokeDasharray="2 1.300" />
          <path d="M4 10.200H11" stroke="#0f6fd6" strokeWidth="1.300" />
        </svg>
        <svg width="14" height="14" viewBox="0 0 14 14" aria-hidden="true">
          <path d="M0 1Q0 0 1 0H6V6H0ZM0 8H6V14H1Q0 14 0 13ZM8 8H14V13Q14 14 13 14H8Z" fill="#0f6fd6" />
          <rect x="8.700" y=".700" width="4.600" height="4.600" rx="1" fill="none" stroke="#0f6fd6" strokeWidth="1.400" />
        </svg>
      </div>
    </div>
  );
}

function Speed({ value, color, arrow }: { value: string; color: string; arrow: string }) {
  return (
    <div className="flex h-[21px] items-center leading-none">
      <Icon w={7} h={8} className={"relative z-40 " + color}>
        <path d={arrow} strokeWidth="1.600" />
      </Icon>
      <span className="relative z-40 ml-auto text-[12px]">{value}</span>
      <span className="relative z-40 text-[9px] text-[#a9adb6]">K/s</span>
    </div>
  );
}

function NetMonitor() {
  return (
    <div className="absolute bottom-[6px] right-px flex h-[60px] w-[119px] items-center">
      <div className="flex h-[43px] w-[76px] flex-col justify-center rounded-l-full bg-[#30353f] pl-[10px] pr-[20px] font-['Noto_Sans'] text-white shadow-[0_0_5px_rgba(0,0,0,0.35)]">
        <Speed value="0" color="text-[#4db4ee]" arrow="M3.500 8V1M.500 4L3.500 1L6.500 4" />
        <Speed value="0.5" color="text-[#44c04a]" arrow="M3.500 0V7M.500 4L3.500 7L6.500 4" />
      </div>
      <div className="absolute right-0 top-0 flex size-[60px] items-center justify-center rounded-full bg-[#585e6d] pr-1 shadow-[0_0_6px_rgba(0,0,0,0.5)]">
        <svg width="60" height="60" viewBox="0 0 60 60" className="absolute inset-0" aria-hidden="true">
          <defs>
            <linearGradient id="gauge" x1="1" y1="0" x2="0" y2="1">
              <stop offset="0" stopColor="#45d9dd" />
              <stop offset=".5" stopColor="#9fe07a" />
              <stop offset="1" stopColor="#f4c245" />
            </linearGradient>
          </defs>
          <circle cx="30" cy="30" r="29.500" fill="none" stroke="#343945" />
          <path d="M30 4A26 26 0 1 1 4 31" fill="none" stroke="url(#gauge)" strokeWidth="1.600" />
          <g fill="none" stroke="#343945">
            <circle cx="33" cy="13" r="1.500" />
            <circle cx="39" cy="13" r="1.500" />
            <circle cx="45" cy="13" r="1.500" />
          </g>
        </svg>
        <span className="relative z-40 font-['Open_Sans'] text-[23px] font-light leading-none text-white">74</span>
        <span className="relative z-40 mt-2 font-['Open_Sans'] text-[9px] leading-none text-white">%</span>
      </div>
    </div>
  );
}

function Watermark() {
  return (
    <div className="pointer-events-none absolute bottom-[7px] right-[8px] z-30 flex items-end opacity-70">
      <svg width="44" height="42" viewBox="0 0 44 42" aria-hidden="true">
        <defs>
          <linearGradient id="swirlBlue" x1="0" y1="1" x2="1" y2="0">
            <stop offset="0" stopColor="#2a6fc0" />
            <stop offset="1" stopColor="#6fc4f5" />
          </linearGradient>
          <linearGradient id="swirlGreen" x1="0" y1="1" x2="1" y2="0">
            <stop offset="0" stopColor="#e8ea4a" />
            <stop offset="1" stopColor="#3cab63" />
          </linearGradient>
        </defs>
        <path d="M42 1Q22-2 8 12Q-4 26 4 35Q12 37 20 33Q6 34 9 23Q14 10 42 1Z" fill="url(#swirlBlue)" />
        <path d="M34 9Q16 12 15 22Q15 29 23 28Q26 26 22 24Q19 20 24 16Q28 12 34 9Z" fill="url(#swirlBlue)" />
        <path d="M34 9Q42 20 38 30Q30 42 4 41Q24 36 28 27Q30 19 34 9Z" fill="url(#swirlGreen)" />
      </svg>
      <div className="flex flex-col">
        <span className="text-[21px] font-bold leading-[22px] text-[#175fb0]">极光下载站</span>
        <span className="font-['Liberation_Sans'] text-[17px] font-bold leading-[18px] text-[#1c9a4a]">www.xz7.com</span>
      </div>
    </div>
  );
}

function Badge({ n, className }: { n: number; className: string }) {
  return (
    <span
      className={
        "absolute z-20 flex size-[22px] items-center justify-center rounded-full border-2 border-white bg-[#0000f5] font-['Noto_Sans'] text-[14px] font-semibold leading-none text-white shadow-[1px_1px_4px_rgba(0,0,0,0.7)] " +
        className
      }
    >
      {n}
    </span>
  );
}

function Arrow({ w, h, line, head, className }: { w: number; h: number; line: string; head: string; className: string }) {
  return (
    <svg
      width={w}
      height={h}
      viewBox={`0 0 ${w} ${h}`}
      className={"pointer-events-none absolute z-20 overflow-visible drop-shadow-[2px_3px_2px_rgba(0,0,0,0.5)] " + className}
      aria-hidden="true"
    >
      <path d={line} stroke="#f00000" strokeWidth="3" strokeLinecap="round" />
      <path d={head} fill="#f00000" />
    </svg>
  );
}

export default function App() {
  return (
    <div className="relative flex h-screen w-full flex-col overflow-hidden whitespace-nowrap bg-[#f6f7f9] font-['Noto_Sans_CJK_SC',sans-serif] text-[12px] leading-[18px]">
      <TitleBar />
      <MenuBar />
      <Ribbon />
      <div className="flex min-h-0 flex-1">
        <ThumbPane />
        <Canvas />
        <CanvasScrollbar />
        <SidePanel />
        <Rail />
      </div>
      <StatusBar />

      <Badge n={2} className="left-[872px] top-[98px]" />
      <Badge n={1} className="bottom-[46px] left-[187px]" />
      <Arrow
        w={81}
        h={110}
        line="M10 13L80 109"
        head="M0 0L19 16L13 17L9 24Z"
        className="left-[828px] top-[112px]"
      />
      <Arrow
        w={173}
        h={127}
        line="M20 112L172 1"
        head="M0 127L17 107L18 113L25 117Z"
        className="bottom-[29px] left-[131px]"
      />
      <ImeBar />
      <NetMonitor />
      <Watermark />
    </div>
  );
}
